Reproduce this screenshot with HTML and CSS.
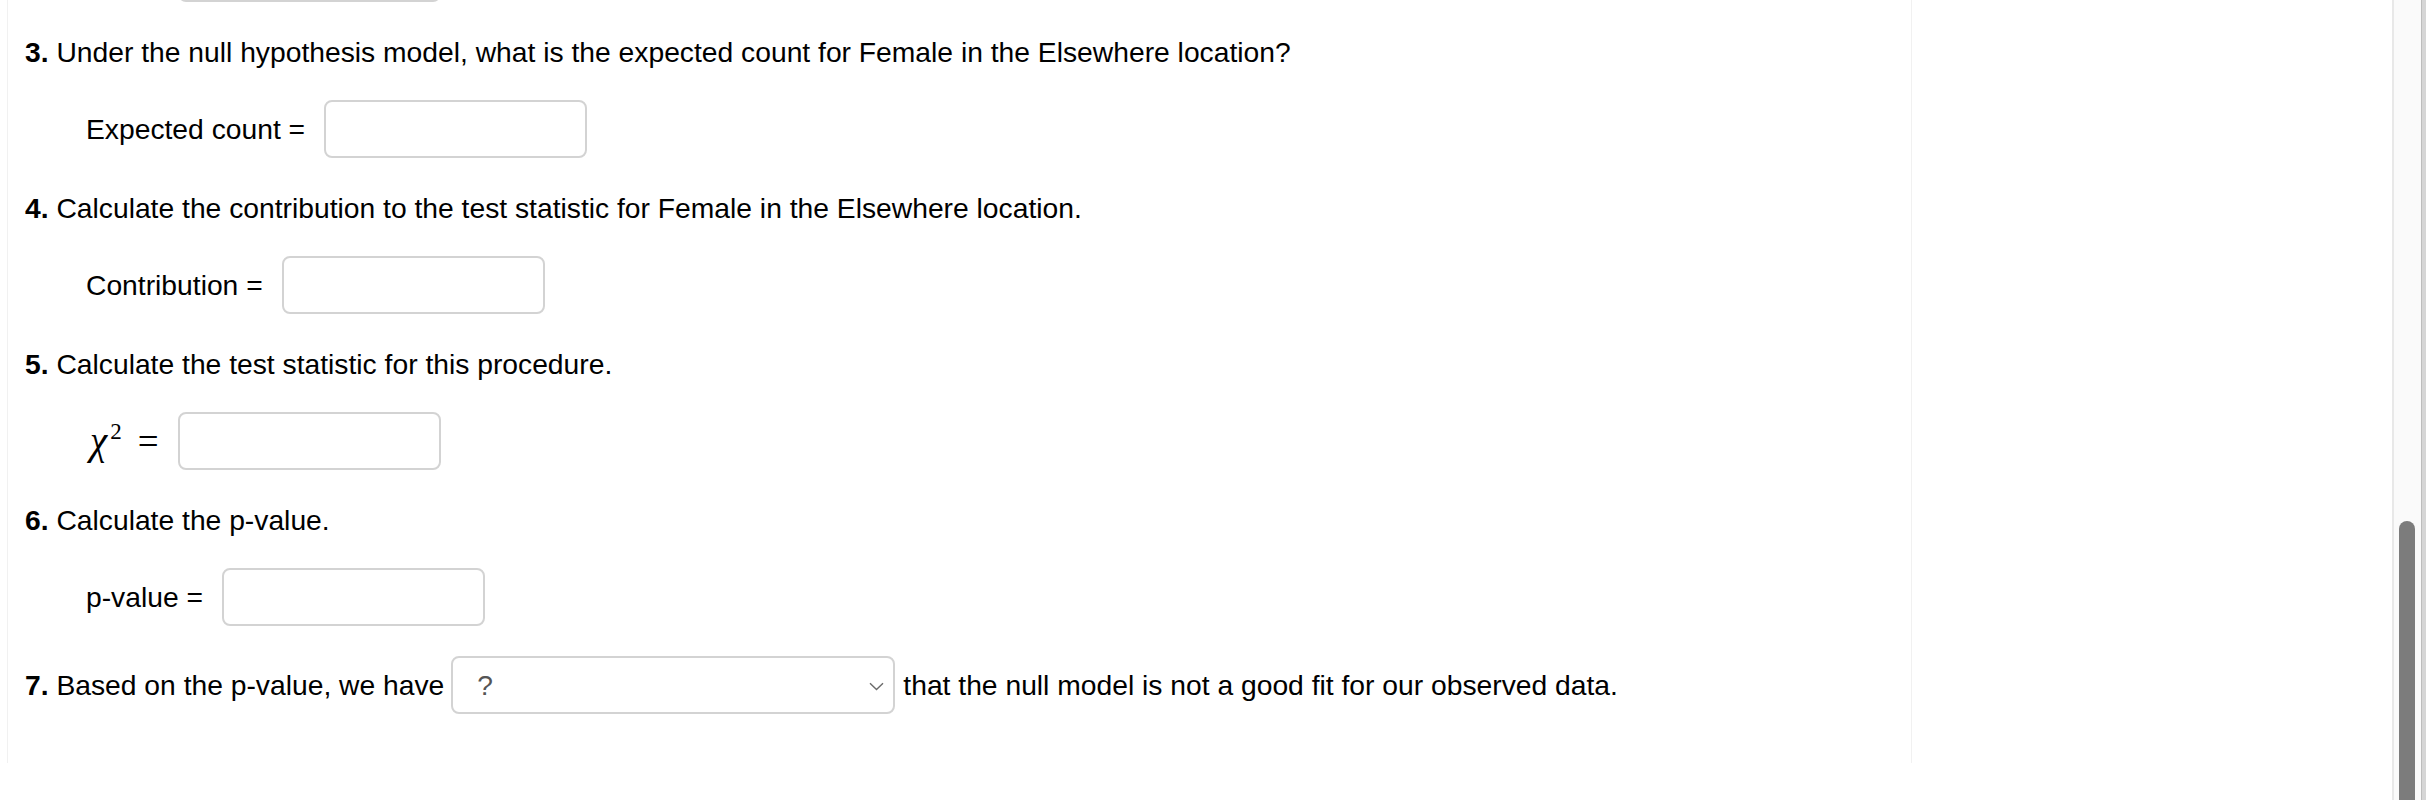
FILE: index.html
```html
<!DOCTYPE html>
<html lang="en">
<head>
<meta charset="utf-8">
<title>Chi-square goodness of fit</title>
<link rel="stylesheet" href="styles.css">
</head>
<body>
<div class="window">
  <main class="main">
    <div class="card">
      <div class="answer answer-prev"><span class="label label-prev" aria-hidden="true"></span><input class="field" type="text" aria-label="previous answer"></div>

      <p class="question"><b>3.</b> Under the null hypothesis model, what is the expected count for Female in the Elsewhere location?</p>
      <div class="answer"><span class="label">Expected count =</span><input class="field" type="text" aria-label="Expected count"></div>

      <p class="question"><b>4.</b> Calculate the contribution to the test statistic for Female in the Elsewhere location.</p>
      <div class="answer"><span class="label">Contribution =</span><input class="field" type="text" aria-label="Contribution"></div>

      <p class="question"><b>5.</b> Calculate the test statistic for this procedure.</p>
      <div class="answer"><span class="label math"><i class="chi">χ</i><sup class="sq">2</sup><span class="eq">=</span></span><input class="field" type="text" aria-label="chi squared"></div>

      <p class="question"><b>6.</b> Calculate the p-value.</p>
      <div class="answer"><span class="label">p-value =</span><input class="field" type="text" aria-label="p-value"></div>

      <div class="question question-inline">
        <span class="qtext"><b>7.</b> Based on the p-value, we have</span>
        <span class="select"><span class="select-value">?</span><svg class="chevron" width="15" height="9" viewBox="0 0 15 9"><path d="M1 1.2 L7.5 7.6 L14 1.2" fill="none" stroke="#6b6b6b" stroke-width="1.4"/></svg></span>
        <span class="qtext">that the null model is not a good fit for our observed data.</span>
      </div>
    </div>
  </main>
  <div class="scrollbar"><div class="thumb"></div></div>
</div>
</body>
</html>
```

FILE: styles.css
```css
html, body {
  margin: 0;
  height: 800px;
  overflow: hidden;
  background: #ffffff;
}

body {
  font-family: "Liberation Sans", Arial, Helvetica, sans-serif;
  font-size: 28.25px;
  color: #000000;
}

.window {
  display: flex;
  height: 800px;
}

.main {
  flex: 1;
  overflow: hidden;
}

.card {
  box-sizing: border-box;
  width: 1905px;
  margin-left: 7px;
  margin-top: -56px;
  padding: 0 0 49px 17px;
  border-left: 1px solid #f1f1f1;
  border-right: 1px solid #f1f1f1;
}

.question {
  margin: 0;
  line-height: 40px;
}

.question b {
  font-weight: 700;
}

.answer {
  display: flex;
  align-items: center;
  gap: 19px;
  margin: 28px 0 30px 61px;
}

.answer-prev {
  margin-top: 0;
}

.label {
  line-height: 40px;
  white-space: nowrap;
}

.label-prev {
  display: block;
  min-width: 73px;
  height: 40px;
}

.field {
  box-sizing: border-box;
  width: 263px;
  height: 58px;
  margin: 0;
  padding: 0 12px;
  border: 2px solid #d3d3d3;
  border-radius: 8px;
  background: #ffffff;
  font: inherit;
  outline: none;
}

.math {
  display: flex;
  align-items: baseline;
  font-family: "Liberation Serif", "Times New Roman", serif;
  margin-left: 4px;
}

.chi {
  font-size: 39px;
  font-style: italic;
}

.sq {
  font-size: 23px;
  line-height: 0;
  position: relative;
  top: -15px;
  margin-left: 3px;
}

.eq {
  font-size: 37px;
  margin-left: 16px;
}

.question-inline {
  display: flex;
  align-items: center;
}

.qtext {
  white-space: nowrap;
}

.select {
  box-sizing: border-box;
  display: flex;
  align-items: center;
  justify-content: space-between;
  width: 444px;
  height: 58px;
  margin: 0 8px 0 7px;
  padding: 0 9px 0 24px;
  border: 2px solid #d3d3d3;
  border-radius: 8px;
  background: #ffffff;
}

.select-value {
  color: #555555;
}

.chevron {
  display: block;
  margin-top: 2px;
}

.scrollbar {
  box-sizing: border-box;
  flex: none;
  width: 34px;
  height: 800px;
  background: #fafafa;
  border-left: 2px solid #e8e8e8;
  border-right: 4px solid #d6d6d6;
  box-shadow: inset -1px 0 0 #bdbdbd;
  display: flex;
  flex-direction: column;
}

.thumb {
  flex: 1;
  width: 16px;
  margin: 521px 0 0 5px;
  background: #7c7c7c;
  border-radius: 8px 8px 0 0;
}
```
